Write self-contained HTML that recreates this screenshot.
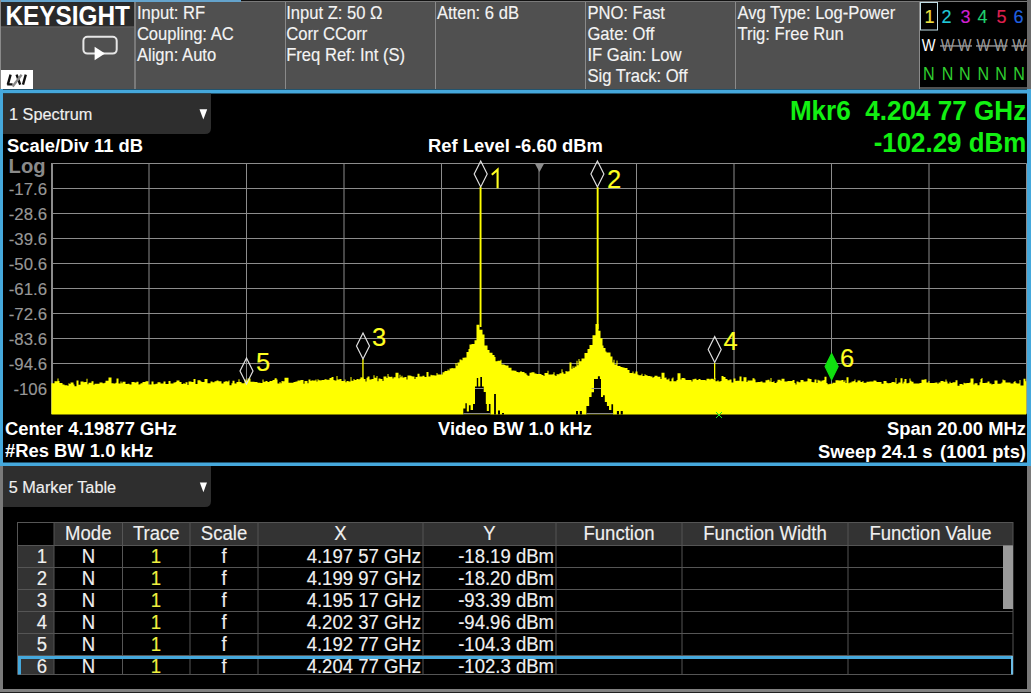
<!DOCTYPE html>
<html><head><meta charset="utf-8"><style>
html,body{margin:0;padding:0;background:#000;width:1031px;height:693px;overflow:hidden}
svg{display:block}
text{font-family:"Liberation Sans", sans-serif}
</style></head><body><svg width="1031" height="693" viewBox="0 0 1031 693" font-family='"Liberation Sans", sans-serif'><rect x="0" y="0" width="1031" height="693" fill="#000" />
<rect x="0" y="0" width="1031" height="89" fill="#505050" />
<rect x="0" y="0" width="241" height="2" fill="#64a3cc" />
<rect x="241" y="0" width="790" height="1" fill="#111" />
<rect x="241" y="1" width="790" height="1" fill="#7a7a7a" />
<rect x="0" y="0" width="1" height="89" fill="#8a8a8a" />
<rect x="1" y="2" width="133" height="24.5" fill="#2a2a2a" />
<rect x="1" y="26.5" width="133" height="1" fill="#5e5e5e" />
<text transform="translate(5.4,24.7) scale(0.9091,1)" x="0" y="0" font-size="26.84" font-weight="bold" fill="#fff"  text-anchor="start" >KEYSIGHT</text>
<rect x="83.4" y="36.7" width="33.3" height="16.9" rx="4" ry="4" fill="none" stroke="#e6e6e6" stroke-width="2"/>
<path d="M94.6 46.8 L105 53.5 L94.6 60.2 Z" fill="#fff"/>
<rect x="1" y="70" width="32" height="19" fill="#fff" />
<path d="M10.6 74.6 L7.8 84.6 M7.2 84.4 H12.6 M16.6 74.6 L20.2 84.6 M25.8 74.6 L23 84.6" stroke="#111" stroke-width="2.4" fill="none"/>
<path d="M21.6 74.8 L12.6 86.6" stroke="#8a8a8a" stroke-width="2.4" fill="none"/>
<rect x="134" y="2" width="2" height="87" fill="#7a7a7a" />
<rect x="285" y="2" width="1" height="87" fill="#8a8a8a" />
<rect x="435" y="2" width="1" height="87" fill="#8a8a8a" />
<rect x="585" y="2" width="1" height="87" fill="#8a8a8a" />
<rect x="735" y="2" width="1" height="87" fill="#8a8a8a" />
<rect x="919" y="2" width="1" height="87" fill="#8a8a8a" />
<text transform="translate(136.9,18.8) scale(0.9346,1)" x="0" y="0" font-size="17.76" font-weight="normal" fill="#f4f4f4" stroke="#f4f4f4" stroke-width="0.15" text-anchor="start" >Input: RF</text>
<text transform="translate(136.9,39.8) scale(0.9346,1)" x="0" y="0" font-size="17.76" font-weight="normal" fill="#f4f4f4" stroke="#f4f4f4" stroke-width="0.15" text-anchor="start" >Coupling: AC</text>
<text transform="translate(136.9,60.8) scale(0.9346,1)" x="0" y="0" font-size="17.76" font-weight="normal" fill="#f4f4f4" stroke="#f4f4f4" stroke-width="0.15" text-anchor="start" >Align: Auto</text>
<text transform="translate(286.2,18.8) scale(0.9346,1)" x="0" y="0" font-size="17.76" font-weight="normal" fill="#f4f4f4" stroke="#f4f4f4" stroke-width="0.15" text-anchor="start" >Input Z: 50 Ω</text>
<text transform="translate(286.2,39.8) scale(0.9346,1)" x="0" y="0" font-size="17.76" font-weight="normal" fill="#f4f4f4" stroke="#f4f4f4" stroke-width="0.15" text-anchor="start" >Corr CCorr</text>
<text transform="translate(286.2,60.8) scale(0.9346,1)" x="0" y="0" font-size="17.76" font-weight="normal" fill="#f4f4f4" stroke="#f4f4f4" stroke-width="0.15" text-anchor="start" >Freq Ref: Int (S)</text>
<text transform="translate(436.9,18.8) scale(0.9346,1)" x="0" y="0" font-size="17.76" font-weight="normal" fill="#f4f4f4" stroke="#f4f4f4" stroke-width="0.15" text-anchor="start" >Atten: 6 dB</text>
<text transform="translate(587.4,18.8) scale(0.9346,1)" x="0" y="0" font-size="17.76" font-weight="normal" fill="#f4f4f4" stroke="#f4f4f4" stroke-width="0.15" text-anchor="start" >PNO: Fast</text>
<text transform="translate(587.4,39.8) scale(0.9346,1)" x="0" y="0" font-size="17.76" font-weight="normal" fill="#f4f4f4" stroke="#f4f4f4" stroke-width="0.15" text-anchor="start" >Gate: Off</text>
<text transform="translate(587.4,60.8) scale(0.9346,1)" x="0" y="0" font-size="17.76" font-weight="normal" fill="#f4f4f4" stroke="#f4f4f4" stroke-width="0.15" text-anchor="start" >IF Gain: Low</text>
<text transform="translate(587.4,81.8) scale(0.9346,1)" x="0" y="0" font-size="17.76" font-weight="normal" fill="#f4f4f4" stroke="#f4f4f4" stroke-width="0.15" text-anchor="start" >Sig Track: Off</text>
<text transform="translate(737.4,18.8) scale(0.9346,1)" x="0" y="0" font-size="17.76" font-weight="normal" fill="#f4f4f4" stroke="#f4f4f4" stroke-width="0.15" text-anchor="start" >Avg Type: Log-Power</text>
<text transform="translate(737.4,39.8) scale(0.9346,1)" x="0" y="0" font-size="17.76" font-weight="normal" fill="#f4f4f4" stroke="#f4f4f4" stroke-width="0.15" text-anchor="start" >Trig: Free Run</text>
<rect x="920" y="2" width="107" height="85" fill="#000" />
<rect x="1027" y="0" width="4" height="89" fill="#6a6a6a" />
<rect x="920.5" y="2.5" width="17" height="27.5" fill="none" stroke="#c0dde6" stroke-width="1"/>
<text x="929.4" y="23.2" font-size="18" font-weight="normal" fill="#f0e040" stroke="#f0e040" stroke-width="0.15" text-anchor="middle" >1</text>
<text x="946.4" y="23.2" font-size="18" font-weight="normal" fill="#20c8d8" stroke="#20c8d8" stroke-width="0.15" text-anchor="middle" >2</text>
<text x="965.4" y="23.2" font-size="18" font-weight="normal" fill="#d020d0" stroke="#d020d0" stroke-width="0.15" text-anchor="middle" >3</text>
<text x="982.4" y="23.2" font-size="18" font-weight="normal" fill="#20d070" stroke="#20d070" stroke-width="0.15" text-anchor="middle" >4</text>
<text x="1001.4" y="23.2" font-size="18" font-weight="normal" fill="#e02050" stroke="#e02050" stroke-width="0.15" text-anchor="middle" >5</text>
<text x="1018.4" y="23.2" font-size="18" font-weight="normal" fill="#2060e0" stroke="#2060e0" stroke-width="0.15" text-anchor="middle" >6</text>
<text transform="translate(928.6,51.2) scale(0.86,1)" x="0" y="0" font-size="17" fill="#fff" text-anchor="middle">W</text>
<text transform="translate(947.6,51.2) scale(0.86,1)" x="0" y="0" font-size="17" fill="#9a9a9a" text-anchor="middle">W</text>
<text transform="translate(964.6,51.2) scale(0.86,1)" x="0" y="0" font-size="17" fill="#9a9a9a" text-anchor="middle">W</text>
<text transform="translate(983.4,51.2) scale(0.86,1)" x="0" y="0" font-size="17" fill="#9a9a9a" text-anchor="middle">W</text>
<text transform="translate(1000.8,51.2) scale(0.86,1)" x="0" y="0" font-size="17" fill="#9a9a9a" text-anchor="middle">W</text>
<text transform="translate(1019.2,51.2) scale(0.86,1)" x="0" y="0" font-size="17" fill="#9a9a9a" text-anchor="middle">W</text>
<rect x="940" y="45.3" width="32" height="1.3" fill="#a0a0a0" />
<rect x="976" y="45.3" width="31.5" height="1.3" fill="#a0a0a0" />
<rect x="1011.5" y="45.3" width="15.5" height="1.3" fill="#a0a0a0" />
<text transform="translate(928.8,79.5) scale(0.92,1)" x="0" y="0" font-size="17.5" fill="#30d030" text-anchor="middle">N</text>
<text transform="translate(947.6,79.5) scale(0.92,1)" x="0" y="0" font-size="17.5" fill="#30d030" text-anchor="middle">N</text>
<text transform="translate(964.8,79.5) scale(0.92,1)" x="0" y="0" font-size="17.5" fill="#30d030" text-anchor="middle">N</text>
<text transform="translate(983.3,79.5) scale(0.92,1)" x="0" y="0" font-size="17.5" fill="#30d030" text-anchor="middle">N</text>
<text transform="translate(1001,79.5) scale(0.92,1)" x="0" y="0" font-size="17.5" fill="#30d030" text-anchor="middle">N</text>
<text transform="translate(1019,79.5) scale(0.92,1)" x="0" y="0" font-size="17.5" fill="#30d030" text-anchor="middle">N</text>
<rect x="0" y="89.5" width="1031" height="4" fill="#45a8dc" />
<rect x="0" y="89" width="3" height="377" fill="#45a8dc" />
<rect x="1027" y="89" width="4" height="377" fill="#45a8dc" />
<rect x="0" y="462.5" width="1031" height="3.5" fill="#45a8dc" />
<path d="M3 93.5 H211 V128 Q211 134 205 134 H3 Z" fill="#2e2e2e"/>
<text transform="translate(9,119.6) scale(0.9662,1)" x="0" y="0" font-size="16.87" font-weight="normal" fill="#f0f0f0" stroke="#f0f0f0" stroke-width="0.15" text-anchor="start" >1 Spectrum</text>
<path d="M199.5 109.2 H207.2 L203.35 119.6 Z" fill="#fff"/>
<text transform="translate(7,152.4) scale(0.9662,1)" x="0" y="0" font-size="19.04" font-weight="bold" fill="#fff"  text-anchor="start" >Scale/Div 11 dB</text>
<text transform="translate(515.5,152.4) scale(0.9662,1)" x="0" y="0" font-size="19.04" font-weight="bold" fill="#fff"  text-anchor="middle" >Ref Level -6.60 dBm</text>
<text transform="translate(1026.2,120.3) scale(0.9434,1)" x="0" y="0" font-size="27.67" font-weight="bold" fill="#12f012"  text-anchor="end" style="white-space:pre">Mkr6  4.204 77 GHz</text>
<text transform="translate(1026.2,152) scale(0.9434,1)" x="0" y="0" font-size="27.45" font-weight="bold" fill="#12f012"  text-anchor="end" >-102.29 dBm</text>
<text x="8.6" y="172.8" font-size="20.2" font-weight="bold" fill="#8a8a8a"  text-anchor="start" >Log</text>
<text x="47" y="195" font-size="16.8" font-weight="normal" fill="#979797" stroke="#979797" stroke-width="0.15" text-anchor="end" >-17.6</text>
<text x="47" y="220" font-size="16.8" font-weight="normal" fill="#979797" stroke="#979797" stroke-width="0.15" text-anchor="end" >-28.6</text>
<text x="47" y="245" font-size="16.8" font-weight="normal" fill="#979797" stroke="#979797" stroke-width="0.15" text-anchor="end" >-39.6</text>
<text x="47" y="270" font-size="16.8" font-weight="normal" fill="#979797" stroke="#979797" stroke-width="0.15" text-anchor="end" >-50.6</text>
<text x="47" y="295" font-size="16.8" font-weight="normal" fill="#979797" stroke="#979797" stroke-width="0.15" text-anchor="end" >-61.6</text>
<text x="47" y="320" font-size="16.8" font-weight="normal" fill="#979797" stroke="#979797" stroke-width="0.15" text-anchor="end" >-72.6</text>
<text x="47" y="345" font-size="16.8" font-weight="normal" fill="#979797" stroke="#979797" stroke-width="0.15" text-anchor="end" >-83.6</text>
<text x="47" y="370" font-size="16.8" font-weight="normal" fill="#979797" stroke="#979797" stroke-width="0.15" text-anchor="end" >-94.6</text>
<text x="47" y="395" font-size="16.8" font-weight="normal" fill="#979797" stroke="#979797" stroke-width="0.15" text-anchor="end" >-106</text>
<path d="M51.5 163.5 H1026.5 M51.5 188.5 H1026.5 M51.5 213.5 H1026.5 M51.5 238.5 H1026.5 M51.5 263.5 H1026.5 M51.5 288.5 H1026.5 M51.5 313.5 H1026.5 M51.5 338.5 H1026.5 M51.5 363.5 H1026.5 M51.5 388.5 H1026.5 M51.5 413.5 H1026.5 M51.5 163.5 V413.5 M149.0 163.5 V413.5 M246.5 163.5 V413.5 M344.0 163.5 V413.5 M441.5 163.5 V413.5 M539.0 163.5 V413.5 M636.5 163.5 V413.5 M734.0 163.5 V413.5 M831.5 163.5 V413.5 M929.0 163.5 V413.5 M1026.5 163.5 V413.5" stroke="#8c8c8c" stroke-width="1" fill="none"/>
<rect x="51" y="163" width="2" height="251" fill="#8c8c8c" />
<path d="M534.6 163 H544.4 L539.5 172 Z" fill="#8c8c8c"/>
<text transform="translate(5,434.8) scale(0.9662,1)" x="0" y="0" font-size="19.04" font-weight="bold" fill="#fff"  text-anchor="start" >Center 4.19877 GHz</text>
<text transform="translate(5,457.3) scale(0.9662,1)" x="0" y="0" font-size="19.04" font-weight="bold" fill="#fff"  text-anchor="start" >#Res BW 1.0 kHz</text>
<text transform="translate(515,434.8) scale(0.9662,1)" x="0" y="0" font-size="19.04" font-weight="bold" fill="#fff"  text-anchor="middle" >Video BW 1.0 kHz</text>
<text transform="translate(1026,434.8) scale(0.9662,1)" x="0" y="0" font-size="19.04" font-weight="bold" fill="#fff"  text-anchor="end" >Span 20.00 MHz</text>
<text transform="translate(1026,457.6) scale(0.9662,1)" font-size="19.04" font-weight="bold" fill="#fff" text-anchor="end">Sweep 24.1 s <tspan dx="2.5">(1001 pts)</tspan></text>
<path d="M51.5 414.5 L51.5 383.2 L54.5 383.2 L54.5 381.3 L57.5 381.3 L57.5 378.4 L58.5 378.4 L58.5 381.0 L59.5 381.0 L59.5 383.0 L60.5 383.0 L60.5 383.1 L62.5 383.1 L62.5 384.5 L64.5 384.5 L64.5 385.2 L67.5 385.2 L67.5 385.8 L68.5 385.8 L68.5 383.2 L69.5 383.2 L69.5 383.9 L70.5 383.9 L70.5 382.4 L73.5 382.4 L73.5 384.6 L74.5 384.6 L74.5 386.3 L76.5 386.3 L76.5 380.5 L78.5 380.5 L78.5 384.7 L80.5 384.7 L80.5 381.6 L83.5 381.6 L83.5 382.2 L84.5 382.2 L84.5 382.0 L86.5 382.0 L86.5 378.8 L87.5 378.8 L87.5 384.2 L88.5 384.2 L88.5 382.7 L91.5 382.7 L91.5 381.3 L93.5 381.3 L93.5 384.8 L94.5 384.8 L94.5 383.8 L95.5 383.8 L95.5 383.7 L97.5 383.7 L97.5 383.8 L99.5 383.8 L99.5 382.4 L102.5 382.4 L102.5 383.2 L104.5 383.2 L104.5 382.7 L105.5 382.7 L105.5 380.7 L108.5 380.7 L108.5 377.4 L111.5 377.4 L111.5 383.2 L113.5 383.2 L113.5 383.4 L115.5 383.4 L115.5 382.8 L116.5 382.8 L116.5 378.5 L118.5 378.5 L118.5 383.6 L120.5 383.6 L120.5 381.6 L121.5 381.6 L121.5 383.3 L122.5 383.3 L122.5 381.8 L125.5 381.8 L125.5 383.9 L127.5 383.9 L127.5 383.7 L129.5 383.7 L129.5 384.4 L131.5 384.4 L131.5 382.0 L134.5 382.0 L134.5 382.4 L136.5 382.4 L136.5 381.7 L138.5 381.7 L138.5 384.6 L139.5 384.6 L139.5 384.3 L140.5 384.3 L140.5 383.3 L142.5 383.3 L142.5 382.1 L145.5 382.1 L145.5 381.3 L148.5 381.3 L148.5 384.5 L151.5 384.5 L151.5 381.4 L153.5 381.4 L153.5 384.2 L155.5 384.2 L155.5 383.8 L157.5 383.8 L157.5 382.3 L158.5 382.3 L158.5 382.2 L160.5 382.2 L160.5 383.6 L163.5 383.6 L163.5 381.5 L165.5 381.5 L165.5 384.1 L167.5 384.1 L167.5 383.9 L168.5 383.9 L168.5 381.1 L170.5 381.1 L170.5 383.4 L173.5 383.4 L173.5 382.4 L175.5 382.4 L175.5 382.1 L176.5 382.1 L176.5 380.5 L179.5 380.5 L179.5 382.0 L181.5 382.0 L181.5 384.0 L183.5 384.0 L183.5 383.0 L184.5 383.0 L184.5 384.1 L185.5 384.1 L185.5 382.2 L186.5 382.2 L186.5 382.2 L187.5 382.2 L187.5 385.0 L188.5 385.0 L188.5 381.4 L191.5 381.4 L191.5 382.1 L193.5 382.1 L193.5 378.9 L195.5 378.9 L195.5 383.9 L197.5 383.9 L197.5 380.2 L200.5 380.2 L200.5 381.2 L201.5 381.2 L201.5 381.9 L204.5 381.9 L204.5 378.9 L207.5 378.9 L207.5 383.3 L210.5 383.3 L210.5 381.4 L212.5 381.4 L212.5 382.3 L214.5 382.3 L214.5 381.2 L215.5 381.2 L215.5 381.3 L216.5 381.3 L216.5 380.4 L218.5 380.4 L218.5 381.3 L221.5 381.3 L221.5 383.5 L223.5 383.5 L223.5 381.8 L225.5 381.8 L225.5 381.1 L226.5 381.1 L226.5 381.4 L228.5 381.4 L228.5 380.4 L229.5 380.4 L229.5 385.3 L231.5 385.3 L231.5 383.2 L232.5 383.2 L232.5 380.8 L234.5 380.8 L234.5 383.5 L236.5 383.5 L236.5 382.0 L238.5 382.0 L238.5 379.3 L239.5 379.3 L239.5 381.9 L241.5 381.9 L241.5 383.3 L244.5 383.3 L244.5 379.3 L245.5 379.3 L245.5 380.6 L247.5 380.6 L247.5 378.6 L250.5 378.6 L250.5 381.7 L253.5 381.7 L253.5 381.7 L254.5 381.7 L254.5 382.1 L257.5 382.1 L257.5 382.8 L260.5 382.8 L260.5 383.1 L262.5 383.1 L262.5 379.5 L263.5 379.5 L263.5 381.7 L265.5 381.7 L265.5 381.0 L267.5 381.0 L267.5 382.0 L269.5 382.0 L269.5 381.0 L272.5 381.0 L272.5 380.0 L274.5 380.0 L274.5 378.4 L275.5 378.4 L275.5 378.0 L276.5 378.0 L276.5 379.4 L277.5 379.4 L277.5 383.6 L279.5 383.6 L279.5 382.0 L280.5 382.0 L280.5 383.2 L281.5 383.2 L281.5 381.1 L282.5 381.1 L282.5 381.3 L284.5 381.3 L284.5 377.7 L287.5 377.7 L287.5 377.8 L288.5 377.8 L288.5 382.7 L291.5 382.7 L291.5 382.7 L293.5 382.7 L293.5 382.1 L295.5 382.1 L295.5 381.6 L297.5 381.6 L297.5 380.5 L300.5 380.5 L300.5 380.1 L303.5 380.1 L303.5 383.8 L304.5 383.8 L304.5 381.0 L307.5 381.0 L307.5 383.2 L308.5 383.2 L308.5 379.5 L310.5 379.5 L310.5 381.1 L311.5 381.1 L311.5 380.3 L312.5 380.3 L312.5 380.5 L315.5 380.5 L315.5 379.5 L316.5 379.5 L316.5 381.5 L317.5 381.5 L317.5 379.3 L318.5 379.3 L318.5 380.2 L320.5 380.2 L320.5 380.5 L321.5 380.5 L321.5 379.9 L323.5 379.9 L323.5 380.0 L324.5 380.0 L324.5 379.2 L326.5 379.2 L326.5 379.7 L329.5 379.7 L329.5 378.0 L331.5 378.0 L331.5 376.9 L333.5 376.9 L333.5 379.9 L334.5 379.9 L334.5 380.5 L336.5 380.5 L336.5 376.0 L337.5 376.0 L337.5 379.4 L339.5 379.4 L339.5 379.0 L341.5 379.0 L341.5 381.0 L344.5 381.0 L344.5 379.4 L345.5 379.4 L345.5 382.2 L346.5 382.2 L346.5 381.0 L348.5 381.0 L348.5 381.6 L350.5 381.6 L350.5 377.0 L351.5 377.0 L351.5 380.8 L353.5 380.8 L353.5 379.1 L354.5 379.1 L354.5 380.0 L356.5 380.0 L356.5 378.9 L358.5 378.9 L358.5 379.4 L359.5 379.4 L359.5 378.7 L360.5 378.7 L360.5 377.3 L361.5 377.3 L361.5 377.5 L363.5 377.5 L363.5 378.9 L365.5 378.9 L365.5 381.4 L366.5 381.4 L366.5 377.8 L367.5 377.8 L367.5 376.5 L369.5 376.5 L369.5 379.6 L371.5 379.6 L371.5 379.1 L373.5 379.1 L373.5 375.3 L374.5 375.3 L374.5 377.8 L376.5 377.8 L376.5 375.9 L377.5 375.9 L377.5 381.2 L378.5 381.2 L378.5 378.5 L380.5 378.5 L380.5 379.0 L382.5 379.0 L382.5 381.0 L383.5 381.0 L383.5 376.4 L386.5 376.4 L386.5 378.0 L387.5 378.0 L387.5 374.0 L388.5 374.0 L388.5 376.4 L389.5 376.4 L389.5 377.0 L390.5 377.0 L390.5 376.7 L392.5 376.7 L392.5 378.5 L393.5 378.5 L393.5 377.2 L395.5 377.2 L395.5 372.8 L398.5 372.8 L398.5 378.3 L399.5 378.3 L399.5 374.8 L400.5 374.8 L400.5 377.2 L401.5 377.2 L401.5 375.7 L402.5 375.7 L402.5 377.6 L404.5 377.6 L404.5 377.1 L406.5 377.1 L406.5 379.4 L407.5 379.4 L407.5 375.4 L410.5 375.4 L410.5 375.7 L411.5 375.7 L411.5 376.2 L412.5 376.2 L412.5 376.5 L414.5 376.5 L414.5 378.9 L415.5 378.9 L415.5 376.9 L417.5 376.9 L417.5 373.7 L419.5 373.7 L419.5 376.5 L422.5 376.5 L422.5 375.7 L424.5 375.7 L424.5 377.0 L426.5 377.0 L426.5 372.0 L428.5 372.0 L428.5 376.5 L430.5 376.5 L430.5 374.7 L431.5 374.7 L431.5 375.2 L434.5 375.2 L434.5 375.6 L436.5 375.6 L436.5 372.9 L437.5 372.9 L437.5 374.5 L440.5 374.5 L440.5 374.4 L442.5 374.4 L442.5 372.2 L444.5 372.2 L444.5 371.1 L447.5 371.1 L447.5 369.4 L448.5 369.4 L448.5 370.5 L449.5 370.5 L449.5 368.4 L451.5 368.4 L451.5 367.9 L452.5 367.9 L452.5 368.2 L455.5 368.2 L455.5 363.0 L456.5 363.0 L456.5 365.7 L457.5 365.7 L457.5 362.4 L459.5 362.4 L459.5 359.5 L461.5 359.5 L461.5 360.2 L462.5 360.2 L462.5 357.8 L464.5 357.8 L464.5 357.4 L466.5 357.4 L466.5 351.9 L468.5 351.9 L468.5 349.0 L469.5 349.0 L469.5 344.6 L471.5 344.6 L471.5 344.1 L474.5 344.1 L474.5 340.3 L476.5 340.3 L476.5 324.7 L479.5 324.7 L479.5 329.7 L482.5 329.7 L482.5 334.5 L484.5 334.5 L484.5 345.6 L487.5 345.6 L487.5 350.0 L489.5 350.0 L489.5 352.8 L492.5 352.8 L492.5 355.0 L494.5 355.0 L494.5 356.9 L495.5 356.9 L495.5 361.3 L497.5 361.3 L497.5 360.7 L500.5 360.7 L500.5 359.8 L501.5 359.8 L501.5 364.5 L504.5 364.5 L504.5 365.0 L505.5 365.0 L505.5 365.6 L508.5 365.6 L508.5 367.7 L511.5 367.7 L511.5 370.6 L514.5 370.6 L514.5 370.7 L516.5 370.7 L516.5 372.0 L518.5 372.0 L518.5 372.6 L519.5 372.6 L519.5 371.9 L520.5 371.9 L520.5 370.9 L521.5 370.9 L521.5 372.0 L524.5 372.0 L524.5 373.3 L526.5 373.3 L526.5 374.7 L527.5 374.7 L527.5 375.8 L529.5 375.8 L529.5 372.7 L531.5 372.7 L531.5 372.2 L534.5 372.2 L534.5 373.5 L536.5 373.5 L536.5 374.1 L538.5 374.1 L538.5 373.9 L541.5 373.9 L541.5 375.0 L543.5 375.0 L543.5 375.9 L544.5 375.9 L544.5 373.0 L547.5 373.0 L547.5 370.7 L548.5 370.7 L548.5 374.4 L550.5 374.4 L550.5 374.5 L552.5 374.5 L552.5 374.3 L553.5 374.3 L553.5 372.2 L554.5 372.2 L554.5 375.3 L555.5 375.3 L555.5 375.9 L556.5 375.9 L556.5 374.2 L559.5 374.2 L559.5 373.3 L561.5 373.3 L561.5 369.3 L562.5 369.3 L562.5 372.2 L563.5 372.2 L563.5 373.8 L565.5 373.8 L565.5 370.9 L566.5 370.9 L566.5 371.6 L568.5 371.6 L568.5 371.2 L569.5 371.2 L569.5 362.4 L571.5 362.4 L571.5 368.8 L572.5 368.8 L572.5 366.2 L573.5 366.2 L573.5 367.9 L574.5 367.9 L574.5 366.4 L576.5 366.4 L576.5 360.7 L577.5 360.7 L577.5 365.2 L578.5 365.2 L578.5 358.9 L579.5 358.9 L579.5 361.2 L581.5 361.2 L581.5 358.6 L582.5 358.6 L582.5 358.5 L584.5 358.5 L584.5 353.1 L587.5 353.1 L587.5 348.9 L589.5 348.9 L589.5 345.0 L592.5 345.0 L592.5 335.3 L595.5 335.3 L595.5 324.1 L598.5 324.1 L598.5 330.8 L600.5 330.8 L600.5 338.2 L602.5 338.2 L602.5 345.5 L603.5 345.5 L603.5 348.1 L605.5 348.1 L605.5 351.6 L606.5 351.6 L606.5 352.6 L608.5 352.6 L608.5 352.5 L610.5 352.5 L610.5 356.5 L612.5 356.5 L612.5 362.4 L613.5 362.4 L613.5 359.8 L614.5 359.8 L614.5 364.5 L616.5 364.5 L616.5 360.6 L617.5 360.6 L617.5 366.1 L620.5 366.1 L620.5 367.1 L622.5 367.1 L622.5 367.6 L624.5 367.6 L624.5 368.0 L627.5 368.0 L627.5 369.9 L629.5 369.9 L629.5 372.9 L632.5 372.9 L632.5 371.6 L633.5 371.6 L633.5 373.4 L635.5 373.4 L635.5 371.6 L637.5 371.6 L637.5 374.5 L638.5 374.5 L638.5 375.3 L641.5 375.3 L641.5 373.7 L642.5 373.7 L642.5 376.0 L644.5 376.0 L644.5 374.3 L645.5 374.3 L645.5 375.2 L647.5 375.2 L647.5 376.1 L650.5 376.1 L650.5 376.6 L652.5 376.6 L652.5 377.8 L653.5 377.8 L653.5 377.0 L654.5 377.0 L654.5 375.8 L657.5 375.8 L657.5 376.8 L660.5 376.8 L660.5 378.9 L661.5 378.9 L661.5 372.7 L664.5 372.7 L664.5 377.7 L665.5 377.7 L665.5 377.6 L666.5 377.6 L666.5 379.4 L668.5 379.4 L668.5 378.5 L669.5 378.5 L669.5 381.3 L671.5 381.3 L671.5 378.5 L672.5 378.5 L672.5 377.4 L673.5 377.4 L673.5 381.3 L676.5 381.3 L676.5 380.0 L677.5 380.0 L677.5 373.3 L680.5 373.3 L680.5 379.5 L681.5 379.5 L681.5 378.1 L684.5 378.1 L684.5 378.4 L685.5 378.4 L685.5 380.0 L688.5 380.0 L688.5 379.9 L691.5 379.9 L691.5 381.6 L692.5 381.6 L692.5 379.2 L694.5 379.2 L694.5 378.7 L696.5 378.7 L696.5 380.1 L698.5 380.1 L698.5 379.1 L700.5 379.1 L700.5 380.1 L702.5 380.1 L702.5 380.1 L705.5 380.1 L705.5 380.5 L706.5 380.5 L706.5 378.7 L708.5 378.7 L708.5 378.8 L709.5 378.8 L709.5 379.5 L710.5 379.5 L710.5 378.8 L711.5 378.8 L711.5 378.7 L713.5 378.7 L713.5 379.6 L714.5 379.6 L714.5 378.2 L715.5 378.2 L715.5 381.3 L717.5 381.3 L717.5 380.2 L718.5 380.2 L718.5 381.5 L720.5 381.5 L720.5 380.9 L721.5 380.9 L721.5 376.0 L723.5 376.0 L723.5 376.9 L725.5 376.9 L725.5 379.0 L727.5 379.0 L727.5 380.3 L729.5 380.3 L729.5 379.5 L731.5 379.5 L731.5 382.4 L733.5 382.4 L733.5 378.6 L735.5 378.6 L735.5 381.1 L736.5 381.1 L736.5 380.8 L739.5 380.8 L739.5 376.4 L741.5 376.4 L741.5 381.2 L743.5 381.2 L743.5 377.2 L746.5 377.2 L746.5 381.9 L747.5 381.9 L747.5 380.4 L748.5 380.4 L748.5 380.4 L751.5 380.4 L751.5 380.6 L752.5 380.6 L752.5 378.3 L754.5 378.3 L754.5 379.5 L755.5 379.5 L755.5 382.2 L757.5 382.2 L757.5 382.0 L760.5 382.0 L760.5 381.5 L762.5 381.5 L762.5 382.5 L765.5 382.5 L765.5 380.2 L767.5 380.2 L767.5 379.8 L769.5 379.8 L769.5 381.5 L770.5 381.5 L770.5 378.1 L771.5 378.1 L771.5 382.0 L773.5 382.0 L773.5 381.2 L774.5 381.2 L774.5 383.1 L776.5 383.1 L776.5 381.7 L777.5 381.7 L777.5 379.8 L779.5 379.8 L779.5 379.7 L780.5 379.7 L780.5 380.8 L781.5 380.8 L781.5 378.8 L784.5 378.8 L784.5 381.6 L787.5 381.6 L787.5 381.0 L789.5 381.0 L789.5 381.1 L792.5 381.1 L792.5 379.9 L794.5 379.9 L794.5 383.1 L795.5 383.1 L795.5 384.6 L796.5 384.6 L796.5 381.5 L798.5 381.5 L798.5 382.2 L800.5 382.2 L800.5 379.9 L803.5 379.9 L803.5 381.6 L806.5 381.6 L806.5 381.3 L807.5 381.3 L807.5 378.6 L809.5 378.6 L809.5 379.1 L811.5 379.1 L811.5 382.0 L812.5 382.0 L812.5 382.3 L814.5 382.3 L814.5 379.4 L816.5 379.4 L816.5 382.9 L817.5 382.9 L817.5 379.8 L818.5 379.8 L818.5 380.6 L820.5 380.6 L820.5 381.6 L821.5 381.6 L821.5 380.5 L823.5 380.5 L823.5 379.9 L824.5 379.9 L824.5 376.8 L826.5 376.8 L826.5 383.0 L827.5 383.0 L827.5 384.2 L829.5 384.2 L829.5 383.8 L832.5 383.8 L832.5 382.8 L835.5 382.8 L835.5 380.3 L838.5 380.3 L838.5 380.5 L841.5 380.5 L841.5 379.9 L843.5 379.9 L843.5 381.8 L844.5 381.8 L844.5 380.3 L845.5 380.3 L845.5 383.0 L846.5 383.0 L846.5 377.2 L848.5 377.2 L848.5 383.3 L849.5 383.3 L849.5 382.5 L851.5 382.5 L851.5 381.5 L853.5 381.5 L853.5 381.0 L854.5 381.0 L854.5 379.5 L855.5 379.5 L855.5 382.3 L857.5 382.3 L857.5 380.6 L860.5 380.6 L860.5 381.9 L862.5 381.9 L862.5 381.1 L863.5 381.1 L863.5 382.7 L866.5 382.7 L866.5 381.8 L869.5 381.8 L869.5 381.4 L870.5 381.4 L870.5 381.4 L872.5 381.4 L872.5 381.6 L873.5 381.6 L873.5 380.6 L875.5 380.6 L875.5 380.8 L876.5 380.8 L876.5 382.1 L879.5 382.1 L879.5 381.9 L881.5 381.9 L881.5 383.7 L883.5 383.7 L883.5 381.0 L886.5 381.0 L886.5 382.8 L887.5 382.8 L887.5 383.3 L889.5 383.3 L889.5 383.1 L891.5 383.1 L891.5 381.9 L894.5 381.9 L894.5 382.6 L895.5 382.6 L895.5 378.1 L896.5 378.1 L896.5 383.9 L897.5 383.9 L897.5 383.6 L898.5 383.6 L898.5 382.5 L900.5 382.5 L900.5 378.2 L902.5 378.2 L902.5 383.5 L903.5 383.5 L903.5 381.7 L904.5 381.7 L904.5 379.0 L906.5 379.0 L906.5 383.2 L908.5 383.2 L908.5 382.8 L909.5 382.8 L909.5 378.5 L910.5 378.5 L910.5 380.8 L911.5 380.8 L911.5 381.7 L913.5 381.7 L913.5 383.5 L916.5 383.5 L916.5 383.5 L919.5 383.5 L919.5 383.1 L921.5 383.1 L921.5 379.7 L924.5 379.7 L924.5 379.2 L926.5 379.2 L926.5 382.6 L928.5 382.6 L928.5 380.9 L929.5 380.9 L929.5 383.0 L931.5 383.0 L931.5 383.1 L934.5 383.1 L934.5 382.8 L935.5 382.8 L935.5 382.5 L937.5 382.5 L937.5 383.7 L938.5 383.7 L938.5 382.6 L940.5 382.6 L940.5 381.1 L943.5 381.1 L943.5 381.8 L945.5 381.8 L945.5 379.4 L946.5 379.4 L946.5 381.4 L947.5 381.4 L947.5 383.4 L949.5 383.4 L949.5 381.8 L950.5 381.8 L950.5 383.0 L952.5 383.0 L952.5 382.3 L955.5 382.3 L955.5 380.2 L957.5 380.2 L957.5 385.8 L959.5 385.8 L959.5 384.0 L962.5 384.0 L962.5 384.8 L963.5 384.8 L963.5 382.7 L964.5 382.7 L964.5 383.2 L966.5 383.2 L966.5 383.0 L969.5 383.0 L969.5 382.5 L970.5 382.5 L970.5 378.5 L973.5 378.5 L973.5 384.5 L974.5 384.5 L974.5 383.3 L977.5 383.3 L977.5 385.3 L979.5 385.3 L979.5 382.3 L980.5 382.3 L980.5 378.9 L981.5 378.9 L981.5 378.0 L982.5 378.0 L982.5 383.0 L985.5 383.0 L985.5 382.7 L987.5 382.7 L987.5 381.5 L989.5 381.5 L989.5 383.4 L991.5 383.4 L991.5 384.4 L992.5 384.4 L992.5 384.0 L994.5 384.0 L994.5 380.5 L997.5 380.5 L997.5 383.8 L1000.5 383.8 L1000.5 383.4 L1001.5 383.4 L1001.5 382.4 L1002.5 382.4 L1002.5 379.6 L1003.5 379.6 L1003.5 380.2 L1005.5 380.2 L1005.5 382.6 L1008.5 382.6 L1008.5 382.5 L1010.5 382.5 L1010.5 383.5 L1013.5 383.5 L1013.5 381.9 L1014.5 381.9 L1014.5 381.0 L1015.5 381.0 L1015.5 382.7 L1016.5 382.7 L1016.5 383.5 L1019.5 383.5 L1019.5 379.9 L1020.5 379.9 L1020.5 385.4 L1023.5 385.4 L1023.5 378.8 L1025.5 378.8 L1025.5 381.2 L1026.3 381.2 L1026.3 414.5 Z" fill="#ffff00"/>
<rect x="479.6" y="187" width="1.9" height="140" fill="#ffff00" />
<rect x="596.7" y="187" width="1.9" height="142" fill="#ffff00" />
<path d="M463.3 414.5 V408.4 H465.4 V403.2 H466.8 V411.5 H468.9 V405.3 H470.6 V410 H473 V404 H475 V386.6 H476.8 V378 H478.2 V386.6 H480.3 V377 H482 V386.6 H483.7 V392 H485.8 V404 H486.8 V411 H488.9 V404 H490.5 V414.5 Z" fill="#000"/>
<path d="M494.1 414.5 V393.9 H495.9 V414.5 Z M498 414.5 V410.5 H500 V414.5 Z M502 414.5 V413 H504 V414.5 Z" fill="#000"/>
<path d="M586.4 414.5 V406 H589.2 V397 H591.6 V392.2 H594 V379 H597.9 V376.2 H599.9 V379 H601 V397 H603 V395.3 H604.8 V401.9 H606.9 V406 H609 V410 H611.4 V404.3 H613.1 V414.5 Z" fill="#000"/>
<path d="M576 414.5 V410.9 H578 V414.5 Z M579.8 414.5 V410.9 H581.9 V414.5 Z M616.9 414.5 V410.9 H619 V414.5 Z M620.7 414.5 V410.9 H622.8 V414.5 Z" fill="#000"/>
<path d="M475 388.5 H483.7 M591.6 388.5 H601 M463.3 413.5 H490.5 M586.4 413.5 H613.1" stroke="#8c8c8c" stroke-width="1"/>
<rect x="362.3" y="359" width="1.3" height="22" fill="#ffff00" />
<rect x="714" y="363" width="1.3" height="16" fill="#ffff00" />
<path d="M480.7 161 L487.2 174 L480.7 187 L474.2 174 Z" fill="none" stroke="#e0e0e0" stroke-width="1.2"/>
<path d="M597.4 161 L603.9 174 L597.4 187 L590.9 174 Z" fill="none" stroke="#e0e0e0" stroke-width="1.2"/>
<path d="M363 333 L369.5 346 L363 359 L356.5 346 Z" fill="none" stroke="#e0e0e0" stroke-width="1.2"/>
<path d="M714.7 336.5 L721.2 349.5 L714.7 362.5 L708.2 349.5 Z" fill="none" stroke="#e0e0e0" stroke-width="1.2"/>
<path d="M246.5 358 L253.0 371 L246.5 384 L240.0 371 Z" fill="none" stroke="#e0e0e0" stroke-width="1.2"/>
<path d="M831.6 353.6 L838.1 366.6 L831.6 379.6 L825.1 366.6 Z" fill="#10e010" stroke="#10e010" stroke-width="1.2"/>
<path d="M491.8 174.8 L497.6 169.6 V188.2" stroke="#ffff20" stroke-width="2.1" fill="none" stroke-linejoin="miter"/>
<text x="607" y="188.2" font-size="25.5" font-weight="normal" fill="#ffff20" stroke="#ffff20" stroke-width="0.15" text-anchor="start" >2</text>
<text x="372" y="346.3" font-size="25.5" font-weight="normal" fill="#ffff20" stroke="#ffff20" stroke-width="0.15" text-anchor="start" >3</text>
<text x="723.5" y="350.4" font-size="25.5" font-weight="normal" fill="#ffff20" stroke="#ffff20" stroke-width="0.15" text-anchor="start" >4</text>
<text x="256" y="370.8" font-size="25.5" font-weight="normal" fill="#ffff20" stroke="#ffff20" stroke-width="0.15" text-anchor="start" >5</text>
<text x="840" y="366.6" font-size="25.5" font-weight="normal" fill="#ffff20" stroke="#ffff20" stroke-width="0.15" text-anchor="start" >6</text>
<path d="M716 412 L722 418 M722 412 L716 418" stroke="#20e020" stroke-width="1"/>
<rect x="0" y="466" width="3" height="227" fill="#7a7a7a" />
<rect x="1027" y="466" width="4" height="227" fill="#7a7a7a" />
<rect x="0" y="689" width="1031" height="3" fill="#808080" />
<rect x="0" y="692" width="1031" height="1" fill="#202020" />
<path d="M3 466 H211 V501 Q211 507 205 507 H3 Z" fill="#2e2e2e"/>
<text transform="translate(8.7,492.7) scale(0.9662,1)" x="0" y="0" font-size="16.87" font-weight="normal" fill="#f0f0f0" stroke="#f0f0f0" stroke-width="0.15" text-anchor="start" >5 Marker Table</text>
<path d="M199.8 482.5 H207 L203.4 492.3 Z" fill="#fff"/>
<rect x="54" y="522" width="959" height="23" fill="#333" />
<rect x="17.5" y="545" width="36.5" height="129.5" fill="#333" />
<path d="M17.5 522.5 H1013 M17.5 545.5 H1013 M17.5 567.5 H1013 M17.5 589.5 H1013 M17.5 611.5 H1013 M17.5 633.5 H1013 M17.5 655.5 H1013 M17.5 674.5 H1013 M17.5 522 V674.5 M54 522 V674.5 M122.5 522 V674.5 M190 522 V674.5 M258 522 V674.5 M423 522 V674.5 M556 522 V674.5 M682 522 V674.5 M848 522 V674.5 M1013 522 V674.5" stroke="#555" stroke-width="1" fill="none"/>
<text transform="translate(88.25,540) scale(0.9615,1)" x="0" y="0" font-size="19.29" font-weight="normal" fill="#f0f0f0" stroke="#f0f0f0" stroke-width="0.15" text-anchor="middle" >Mode</text>
<text transform="translate(156.25,540) scale(0.9615,1)" x="0" y="0" font-size="19.29" font-weight="normal" fill="#f0f0f0" stroke="#f0f0f0" stroke-width="0.15" text-anchor="middle" >Trace</text>
<text transform="translate(224.0,540) scale(0.9615,1)" x="0" y="0" font-size="19.29" font-weight="normal" fill="#f0f0f0" stroke="#f0f0f0" stroke-width="0.15" text-anchor="middle" >Scale</text>
<text transform="translate(340.5,540) scale(0.9615,1)" x="0" y="0" font-size="19.29" font-weight="normal" fill="#f0f0f0" stroke="#f0f0f0" stroke-width="0.15" text-anchor="middle" >X</text>
<text transform="translate(489.5,540) scale(0.9615,1)" x="0" y="0" font-size="19.29" font-weight="normal" fill="#f0f0f0" stroke="#f0f0f0" stroke-width="0.15" text-anchor="middle" >Y</text>
<text transform="translate(619.0,540) scale(0.9615,1)" x="0" y="0" font-size="19.29" font-weight="normal" fill="#f0f0f0" stroke="#f0f0f0" stroke-width="0.15" text-anchor="middle" >Function</text>
<text transform="translate(765.0,540) scale(0.9615,1)" x="0" y="0" font-size="19.29" font-weight="normal" fill="#f0f0f0" stroke="#f0f0f0" stroke-width="0.15" text-anchor="middle" >Function Width</text>
<text transform="translate(930.5,540) scale(0.9615,1)" x="0" y="0" font-size="19.29" font-weight="normal" fill="#f0f0f0" stroke="#f0f0f0" stroke-width="0.15" text-anchor="middle" >Function Value</text>
<text transform="translate(47,562.8) scale(0.9615,1)" x="0" y="0" font-size="19.29" font-weight="normal" fill="#f0f0f0" stroke="#f0f0f0" stroke-width="0.15" text-anchor="end" >1</text>
<text transform="translate(88.5,562.8) scale(0.9615,1)" x="0" y="0" font-size="19.29" font-weight="normal" fill="#f0f0f0" stroke="#f0f0f0" stroke-width="0.15" text-anchor="middle" >N</text>
<text transform="translate(156,562.8) scale(0.9615,1)" x="0" y="0" font-size="19.29" font-weight="normal" fill="#f0f040" stroke="#f0f040" stroke-width="0.15" text-anchor="middle" >1</text>
<text transform="translate(224,562.8) scale(0.9615,1)" x="0" y="0" font-size="19.29" font-weight="normal" fill="#f0f0f0" stroke="#f0f0f0" stroke-width="0.15" text-anchor="middle" >f</text>
<text transform="translate(421,562.8) scale(0.9615,1)" x="0" y="0" font-size="19.29" font-weight="normal" fill="#f0f0f0" stroke="#f0f0f0" stroke-width="0.15" text-anchor="end" >4.197 57 GHz</text>
<text transform="translate(554,562.8) scale(0.9615,1)" x="0" y="0" font-size="19.29" font-weight="normal" fill="#f0f0f0" stroke="#f0f0f0" stroke-width="0.15" text-anchor="end" >-18.19 dBm</text>
<text transform="translate(47,584.8) scale(0.9615,1)" x="0" y="0" font-size="19.29" font-weight="normal" fill="#f0f0f0" stroke="#f0f0f0" stroke-width="0.15" text-anchor="end" >2</text>
<text transform="translate(88.5,584.8) scale(0.9615,1)" x="0" y="0" font-size="19.29" font-weight="normal" fill="#f0f0f0" stroke="#f0f0f0" stroke-width="0.15" text-anchor="middle" >N</text>
<text transform="translate(156,584.8) scale(0.9615,1)" x="0" y="0" font-size="19.29" font-weight="normal" fill="#f0f040" stroke="#f0f040" stroke-width="0.15" text-anchor="middle" >1</text>
<text transform="translate(224,584.8) scale(0.9615,1)" x="0" y="0" font-size="19.29" font-weight="normal" fill="#f0f0f0" stroke="#f0f0f0" stroke-width="0.15" text-anchor="middle" >f</text>
<text transform="translate(421,584.8) scale(0.9615,1)" x="0" y="0" font-size="19.29" font-weight="normal" fill="#f0f0f0" stroke="#f0f0f0" stroke-width="0.15" text-anchor="end" >4.199 97 GHz</text>
<text transform="translate(554,584.8) scale(0.9615,1)" x="0" y="0" font-size="19.29" font-weight="normal" fill="#f0f0f0" stroke="#f0f0f0" stroke-width="0.15" text-anchor="end" >-18.20 dBm</text>
<text transform="translate(47,606.8) scale(0.9615,1)" x="0" y="0" font-size="19.29" font-weight="normal" fill="#f0f0f0" stroke="#f0f0f0" stroke-width="0.15" text-anchor="end" >3</text>
<text transform="translate(88.5,606.8) scale(0.9615,1)" x="0" y="0" font-size="19.29" font-weight="normal" fill="#f0f0f0" stroke="#f0f0f0" stroke-width="0.15" text-anchor="middle" >N</text>
<text transform="translate(156,606.8) scale(0.9615,1)" x="0" y="0" font-size="19.29" font-weight="normal" fill="#f0f040" stroke="#f0f040" stroke-width="0.15" text-anchor="middle" >1</text>
<text transform="translate(224,606.8) scale(0.9615,1)" x="0" y="0" font-size="19.29" font-weight="normal" fill="#f0f0f0" stroke="#f0f0f0" stroke-width="0.15" text-anchor="middle" >f</text>
<text transform="translate(421,606.8) scale(0.9615,1)" x="0" y="0" font-size="19.29" font-weight="normal" fill="#f0f0f0" stroke="#f0f0f0" stroke-width="0.15" text-anchor="end" >4.195 17 GHz</text>
<text transform="translate(554,606.8) scale(0.9615,1)" x="0" y="0" font-size="19.29" font-weight="normal" fill="#f0f0f0" stroke="#f0f0f0" stroke-width="0.15" text-anchor="end" >-93.39 dBm</text>
<text transform="translate(47,628.8) scale(0.9615,1)" x="0" y="0" font-size="19.29" font-weight="normal" fill="#f0f0f0" stroke="#f0f0f0" stroke-width="0.15" text-anchor="end" >4</text>
<text transform="translate(88.5,628.8) scale(0.9615,1)" x="0" y="0" font-size="19.29" font-weight="normal" fill="#f0f0f0" stroke="#f0f0f0" stroke-width="0.15" text-anchor="middle" >N</text>
<text transform="translate(156,628.8) scale(0.9615,1)" x="0" y="0" font-size="19.29" font-weight="normal" fill="#f0f040" stroke="#f0f040" stroke-width="0.15" text-anchor="middle" >1</text>
<text transform="translate(224,628.8) scale(0.9615,1)" x="0" y="0" font-size="19.29" font-weight="normal" fill="#f0f0f0" stroke="#f0f0f0" stroke-width="0.15" text-anchor="middle" >f</text>
<text transform="translate(421,628.8) scale(0.9615,1)" x="0" y="0" font-size="19.29" font-weight="normal" fill="#f0f0f0" stroke="#f0f0f0" stroke-width="0.15" text-anchor="end" >4.202 37 GHz</text>
<text transform="translate(554,628.8) scale(0.9615,1)" x="0" y="0" font-size="19.29" font-weight="normal" fill="#f0f0f0" stroke="#f0f0f0" stroke-width="0.15" text-anchor="end" >-94.96 dBm</text>
<text transform="translate(47,650.8) scale(0.9615,1)" x="0" y="0" font-size="19.29" font-weight="normal" fill="#f0f0f0" stroke="#f0f0f0" stroke-width="0.15" text-anchor="end" >5</text>
<text transform="translate(88.5,650.8) scale(0.9615,1)" x="0" y="0" font-size="19.29" font-weight="normal" fill="#f0f0f0" stroke="#f0f0f0" stroke-width="0.15" text-anchor="middle" >N</text>
<text transform="translate(156,650.8) scale(0.9615,1)" x="0" y="0" font-size="19.29" font-weight="normal" fill="#f0f040" stroke="#f0f040" stroke-width="0.15" text-anchor="middle" >1</text>
<text transform="translate(224,650.8) scale(0.9615,1)" x="0" y="0" font-size="19.29" font-weight="normal" fill="#f0f0f0" stroke="#f0f0f0" stroke-width="0.15" text-anchor="middle" >f</text>
<text transform="translate(421,650.8) scale(0.9615,1)" x="0" y="0" font-size="19.29" font-weight="normal" fill="#f0f0f0" stroke="#f0f0f0" stroke-width="0.15" text-anchor="end" >4.192 77 GHz</text>
<text transform="translate(554,650.8) scale(0.9615,1)" x="0" y="0" font-size="19.29" font-weight="normal" fill="#f0f0f0" stroke="#f0f0f0" stroke-width="0.15" text-anchor="end" >-104.3 dBm</text>
<text transform="translate(47,672.8) scale(0.9615,1)" x="0" y="0" font-size="19.29" font-weight="normal" fill="#f0f0f0" stroke="#f0f0f0" stroke-width="0.15" text-anchor="end" >6</text>
<text transform="translate(88.5,672.8) scale(0.9615,1)" x="0" y="0" font-size="19.29" font-weight="normal" fill="#f0f0f0" stroke="#f0f0f0" stroke-width="0.15" text-anchor="middle" >N</text>
<text transform="translate(156,672.8) scale(0.9615,1)" x="0" y="0" font-size="19.29" font-weight="normal" fill="#f0f040" stroke="#f0f040" stroke-width="0.15" text-anchor="middle" >1</text>
<text transform="translate(224,672.8) scale(0.9615,1)" x="0" y="0" font-size="19.29" font-weight="normal" fill="#f0f0f0" stroke="#f0f0f0" stroke-width="0.15" text-anchor="middle" >f</text>
<text transform="translate(421,672.8) scale(0.9615,1)" x="0" y="0" font-size="19.29" font-weight="normal" fill="#f0f0f0" stroke="#f0f0f0" stroke-width="0.15" text-anchor="end" >4.204 77 GHz</text>
<text transform="translate(554,672.8) scale(0.9615,1)" x="0" y="0" font-size="19.29" font-weight="normal" fill="#f0f0f0" stroke="#f0f0f0" stroke-width="0.15" text-anchor="end" >-102.3 dBm</text>
<rect x="1003" y="545.5" width="10" height="63.5" fill="#9a9a9a" />
<rect x="18" y="656" width="995" height="3" fill="#45a8dc" />
<rect x="18" y="656" width="3" height="18.5" fill="#45a8dc" />
<rect x="1011" y="656" width="2" height="18.5" fill="#6cbde6" /></svg></body></html>
